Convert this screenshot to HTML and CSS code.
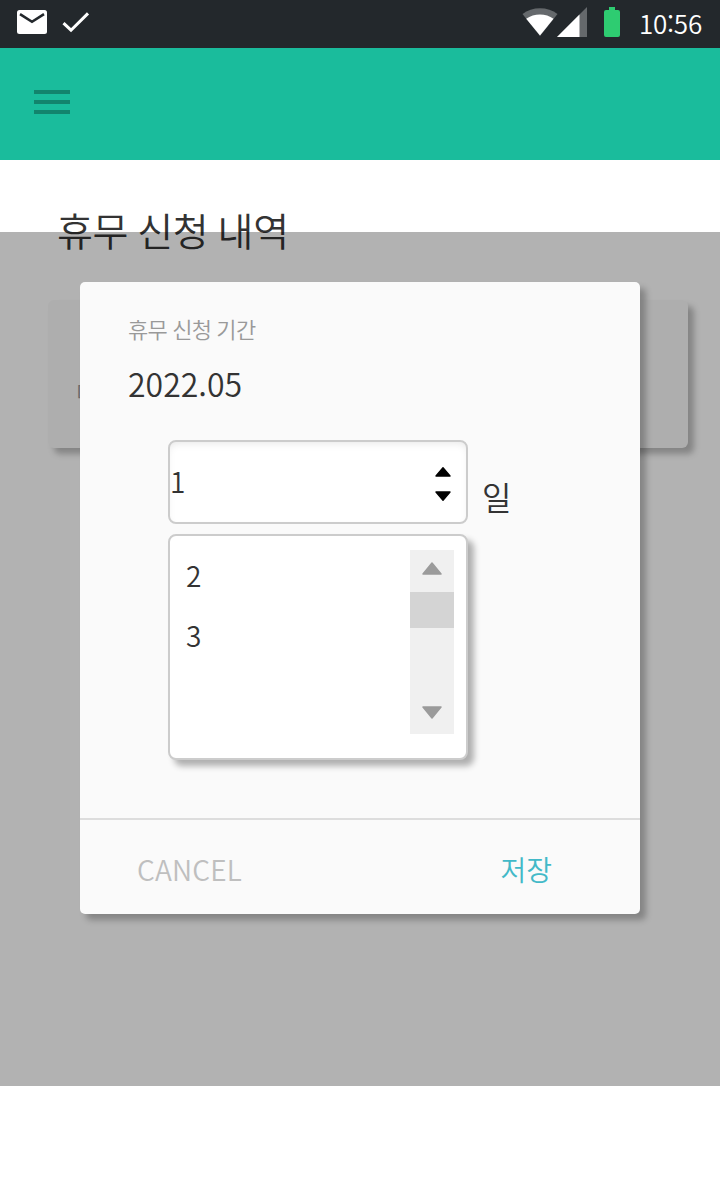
FILE: index.html
```html
<!DOCTYPE html>
<html lang="ko">
<head>
<meta charset="utf-8">
<title>휴무 신청 내역</title>
<link rel="stylesheet" href="styles.css">
</head>
<body>
<div class="screen">
  <header class="status">
    <div class="status-left">
      <svg class="mail" width="30" height="24" viewBox="0 0 30 24"><rect width="30" height="24" rx="2.5" fill="#fff"/><path d="M3 4.2L15 11.800L27 4.2" fill="none" stroke="#23282c" stroke-width="2.6"/></svg>
      <svg class="check" width="28" height="21" viewBox="0 0 28 21"><path d="M1.5 11.2L9 18.2L26 1.4" fill="none" stroke="#fff" stroke-width="3"/></svg>
    </div>
    <div class="status-right">
      <svg class="wifi" width="36" height="28" viewBox="0 0 36 28"><path d="M.5 6C10-1.8 26-1.8 35.500 6L18 28Z" fill="#65696c"/><path d="M4.200 10.800C12 5 24 5 31.500 10.800L18 27.500Z" fill="#fff"/></svg>
      <svg class="signal" width="30" height="30" viewBox="0 0 30 30"><path d="M0 30L30 0V30Z" fill="#65696c"/><path d="M0 30L22.500 7.500V30Z" fill="#fff"/></svg>
      <svg class="battery" width="16" height="30" viewBox="0 0 16 30"><path d="M5 0h6v3h3a2 2 0 0 1 2 2v23a2 2 0 0 1-2 2H2a2 2 0 0 1-2-2V5a2 2 0 0 1 2-2h3z" fill="#2ecc71"/></svg>
      <span class="clock">10:56</span>
    </div>
  </header>
  <nav class="appbar">
    <div class="menu"><i></i><i></i><i></i></div>
  </nav>
  <main class="content">
    <h1 class="title">휴무 신청 내역</h1>
    <section class="card"><span class="card-text">미</span></section>
    <div class="overlay">
      <section class="dialog">
        <div class="dialog-body">
          <div class="label">휴무 신청 기간</div>
          <div class="month">2022.05</div>
          <div class="picker">
            <div class="picker-col">
              <div class="select">
                <span class="value">1</span>
                <svg class="stepper" width="16" height="34" viewBox="0 0 16 34"><path d="M8 .8L15 9H1Z M1 25H15L8 33.200Z" stroke="#000" stroke-width="1.400" stroke-linejoin="round"/></svg>
              </div>
              <div class="dropdown">
                <div class="options"><div>2</div><div>3</div></div>
                <div class="scrollbar">
                  <svg class="arrow-up" width="20" height="13" viewBox="0 0 20 13"><path d="M10 1L19 12H1Z"/></svg>
                  <div class="thumb"></div>
                  <svg class="arrow-down" width="20" height="13" viewBox="0 0 20 13"><path d="M1 1H19L10 12Z"/></svg>
                </div>
              </div>
            </div>
            <span class="unit">일</span>
          </div>
        </div>
        <footer class="actions">
          <span class="cancel">CANCEL</span>
          <span class="save">저장</span>
        </footer>
      </section>
    </div>
  </main>
</div>
</body>
</html>
```
FILE: styles.css
```css
* { box-sizing: border-box; }
body { margin: 0; font-family: "Noto Sans CJK KR", sans-serif; font-weight: 350; color: #333; background: #fff; }
svg { display: block; flex: none; }
.screen { width: 720px; height: 1200px; overflow: hidden; background: #fff; }
.status { height: 48px; background: #23282c; display: flex; justify-content: space-between; padding: 0 18px 0 17px; }
.status-left, .status-right { display: flex; align-items: flex-start; }
.mail { margin-top: 10px; }
.check { margin: 12px 0 0 15px; }
.wifi { margin-top: 8px; }
.signal { margin: 7px 0 0 -1px; }
.battery { margin: 7px 19px 0 17px; }
.clock { font-size: 26px; line-height: 46px; letter-spacing: -.2px; color: #fff; }
.appbar { height: 112px; background: #1abc9c; padding: 42px 34px; }
.menu { width: 36px; display: grid; gap: 6px; }
.menu i { height: 4px; background: #12846d; }
.content { position: relative; height: 1040px; padding: 39px 32px 0 48px; }
.title { margin: 0; padding-left: 9px; font-size: 39px; font-weight: 350; line-height: 60px; letter-spacing: -.3px; word-spacing: -1.5px; }
.card { height: 148px; margin-top: 41px; padding: 75px 0 0 28px; background: #fafafa; border-radius: 6px; box-shadow: 6px 6px 6px rgba(0,0,0,.26); }
.card-text { display: block; font-size: 22px; line-height: 32px; color: #999; }
.overlay { position: absolute; left: 0; right: 0; top: 72px; height: 854px; padding: 50px 80px; background: rgba(0,0,0,.3); }
.dialog { height: 632px; background: #fafafa; border-radius: 5px; box-shadow: 6px 6px 6px rgba(0,0,0,.26); display: flex; flex-direction: column; }
.dialog-body { height: 536px; padding: 30px 48px 0; }
.label { font-size: 22px; line-height: 32px; letter-spacing: -.03em; word-spacing: -.5px; color: #999; }
.month { font-size: 32px; line-height: 48px; margin-top: 15px; }
.picker { display: flex; align-items: flex-start; margin: 33px 0 0 40px; }
.picker-col { width: 300px; }
.select { height: 84px; padding: 0 15px 0 0; display: flex; align-items: center; justify-content: space-between; border: 2px solid #ccc; border-radius: 8px; background: #fff; box-shadow: inset 0 4px 8px -3px rgba(0,0,0,.1); font-size: 28px; }
.value { padding-bottom: 3px; }
.stepper { margin-top: 4px; }
.dropdown { height: 226px; margin-top: 10px; padding: 14px 12px 0 16px; display: flex; justify-content: space-between; border: 2px solid #ccc; border-radius: 8px; background: #fff; box-shadow: 6px 6px 6px rgba(0,0,0,.3); }
.options { font-size: 28px; line-height: 60px; margin-top: -5px; }
.scrollbar { width: 44px; height: 184px; padding: 12px 0; background: #f0f0f0; display: flex; flex-direction: column; align-items: center; }
.scrollbar path { fill: #9b9b9b; stroke: #9b9b9b; stroke-width: 1.500; stroke-linejoin: round; }
.thumb { width: 44px; height: 36px; margin-top: 17px; background: #d4d4d4; }
.arrow-down { margin-top: 78px; }
.unit { font-size: 32px; line-height: 48px; margin: 32px 0 0 14px; }
.actions { height: 96px; border-top: 2px solid #ddd; display: flex; justify-content: space-between; align-items: center; padding: 3px 88px 0 57px; font-size: 28px; }
.cancel { color: #bfbfbf; letter-spacing: .2px; }
.save { color: #42b9c8; }
```
